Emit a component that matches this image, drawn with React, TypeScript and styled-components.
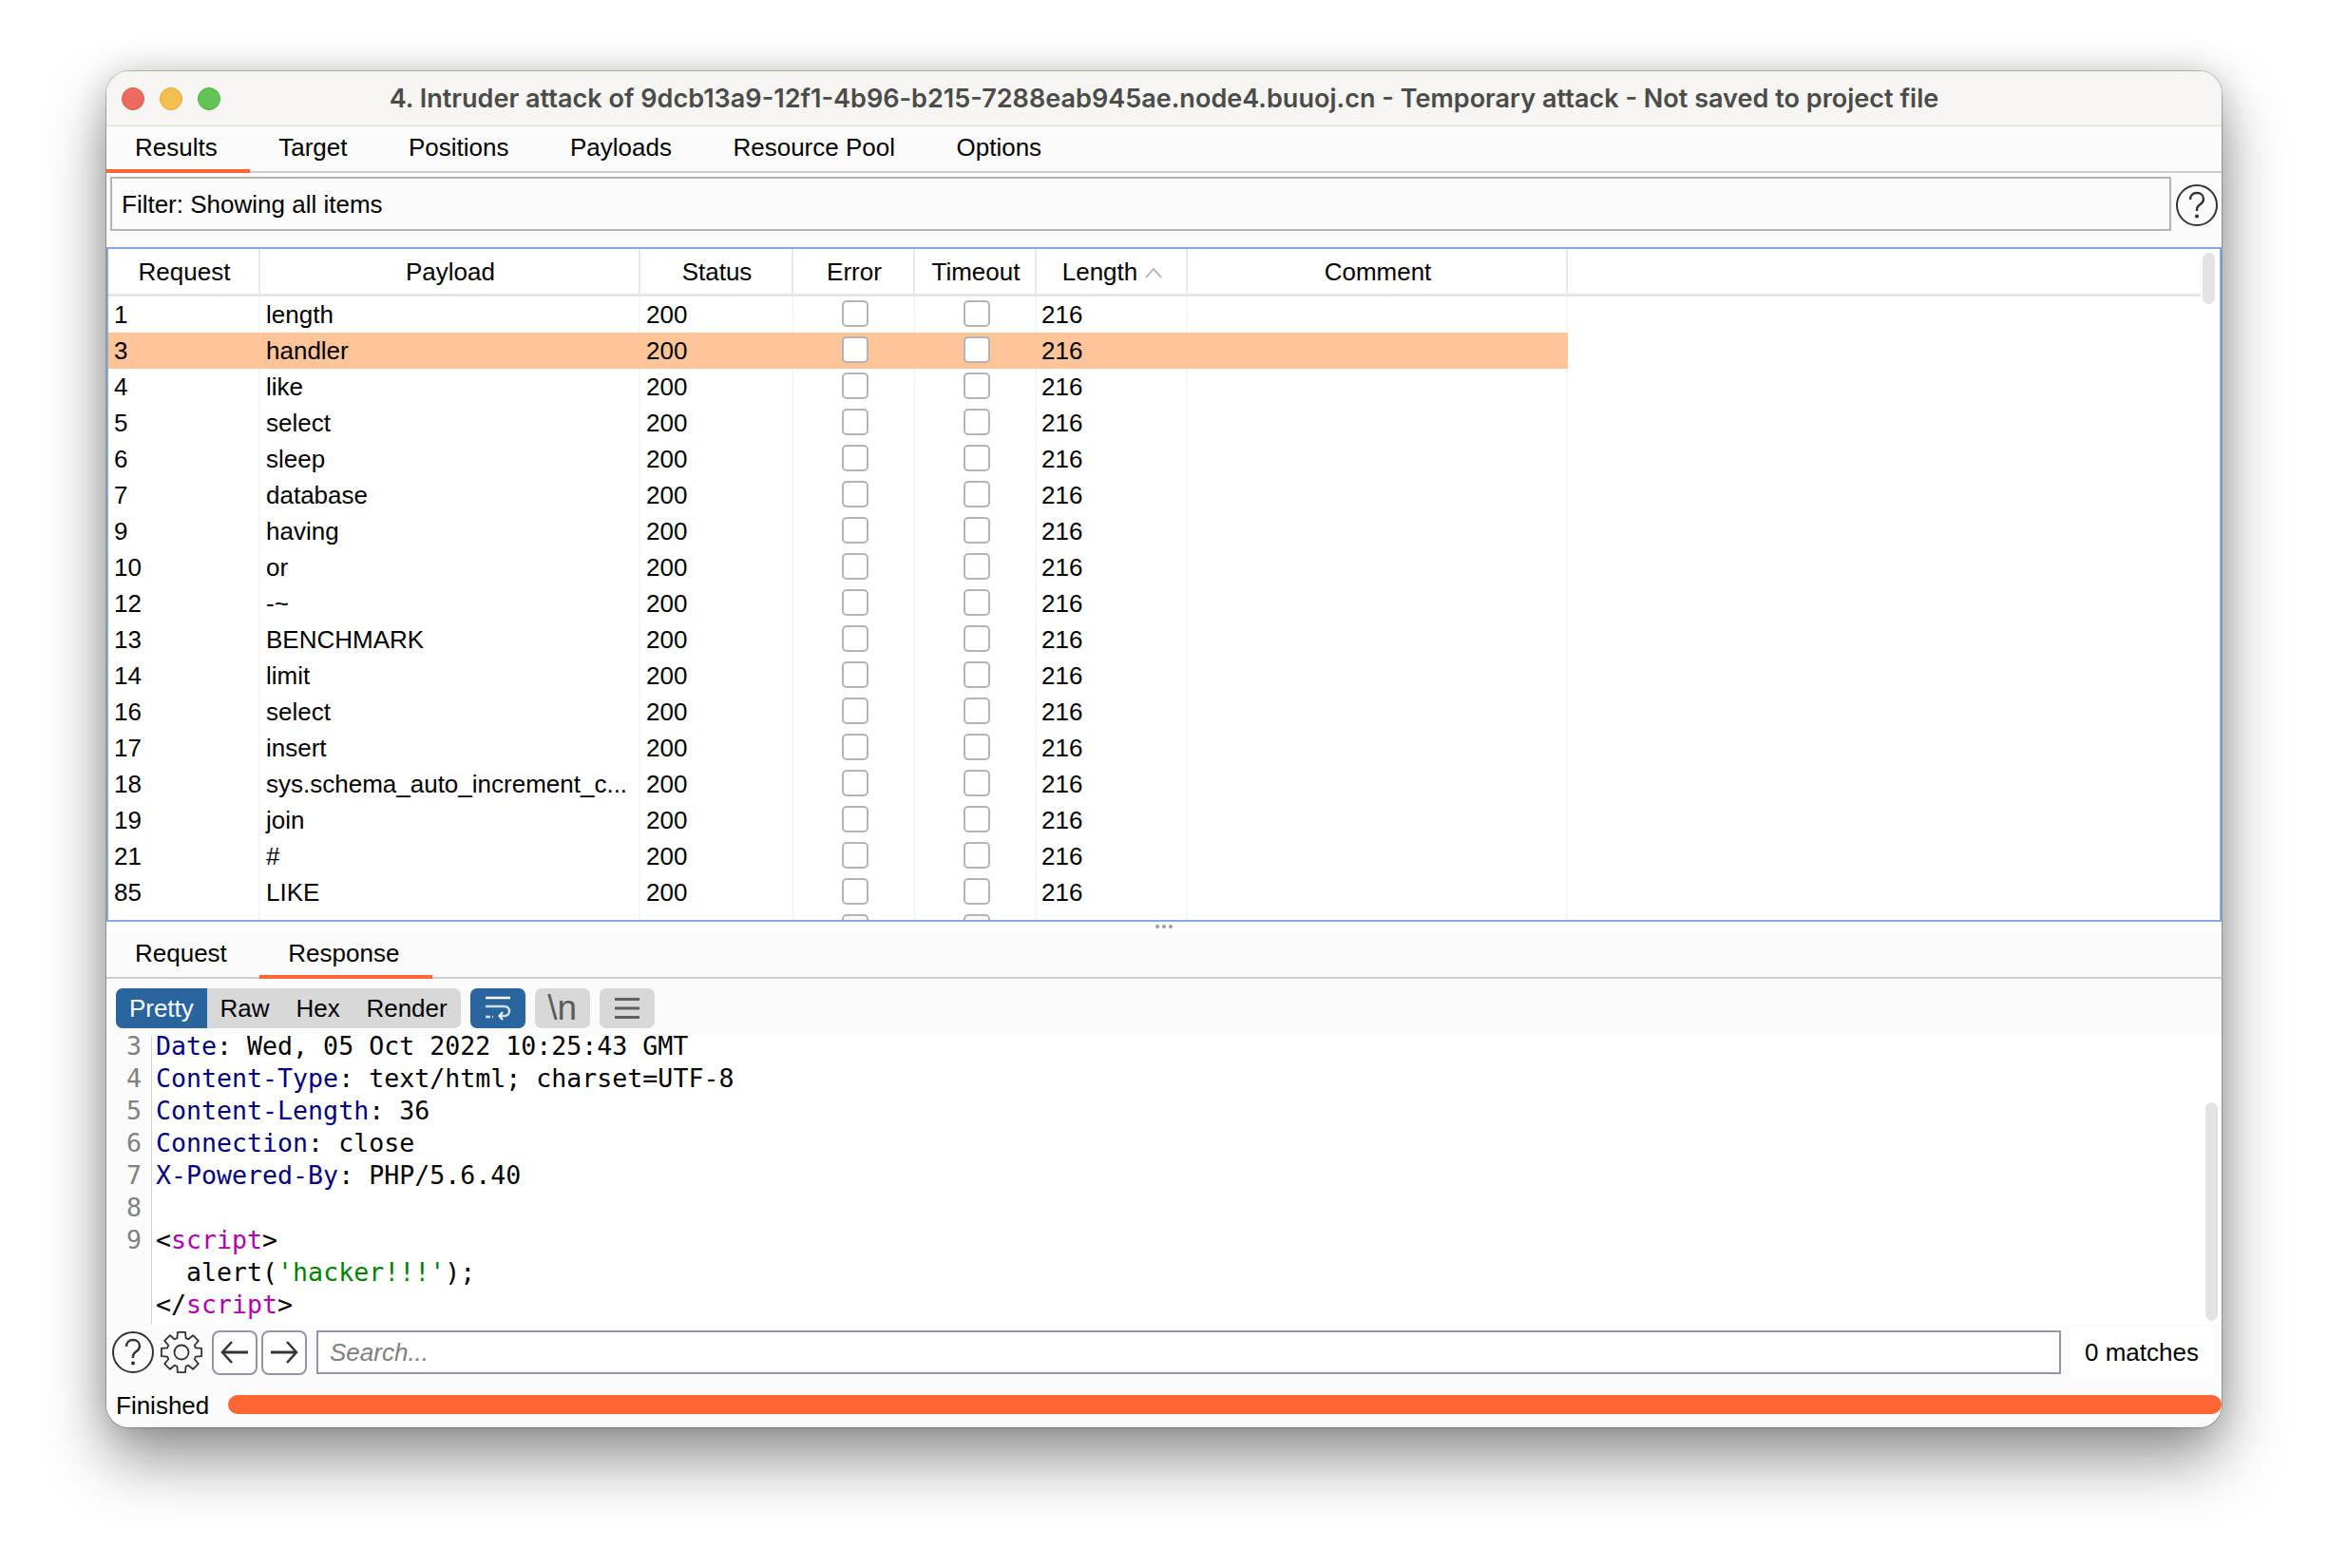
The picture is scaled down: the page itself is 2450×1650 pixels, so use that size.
import React from "react";
import styled, { createGlobalStyle } from "styled-components";

const Global = createGlobalStyle`
  html, body { margin: 0; padding: 0; background: #ffffff; }
  body { font-family: "Liberation Sans", Arial, sans-serif; color: #000; }
`;

const Page = styled.div`
  width: 2450px;
  height: 1650px;
  padding: 75px 112px 0;
  box-sizing: border-box;
  overflow: hidden;
`;

const Window = styled.div`
  width: 2226px;
  height: 1427px;
  background: #fbfbfb;
  border-radius: 24px;
  overflow: hidden;
  display: flex;
  flex-direction: column;
`;

const WindowShadow = styled.div`
  width: 2226px;
  height: 1427px;
  border-radius: 24px;
  box-shadow: 0 0 0 1px rgba(0, 0, 0, 0.22), 0 34px 66px rgba(0, 0, 0, 0.42), 0 0 34px rgba(0, 0, 0, 0.16);
`;

const TitleBar = styled.div`
  position: relative;
  height: 57px;
  flex: none;
  background: #f6f5f2;
  border-bottom: 1px solid #dcdcda;
  display: flex;
  align-items: center;
  justify-content: center;
`;

const Lights = styled.div`
  position: absolute;
  left: 16px;
  top: 17px;
  display: flex;
  gap: 16px;
`;

const Light = styled.span<{ $c: string; $b: string }>`
  width: 24px;
  height: 24px;
  border-radius: 50%;
  box-sizing: border-box;
  background: ${(p) => p.$c};
  border: 1px solid ${(p) => p.$b};
`;

const Title = styled.div`
  font-family: Inter, "Liberation Sans", sans-serif;
  font-weight: 600;
  font-size: 27.05px;
  color: #4b4b49;
  white-space: nowrap;
`;

const TabBar = styled.div<{ $h: number }>`
  height: ${(p) => p.$h}px;
  flex: none;
  box-sizing: border-box;
  display: flex;
  border-bottom: 2px solid #cbcdcb;
`;

const Tab = styled.div<{ $active?: boolean; $pt: number }>`
  position: relative;
  padding: ${(p) => p.$pt}px 34.5px 0 30px;
  font-size: 26px;
  line-height: 1;
  height: 100%;
  box-sizing: border-box;
  &::after {
    content: "";
    display: ${(p) => (p.$active ? "block" : "none")};
    position: absolute;
    left: 0;
    right: 0;
    bottom: -2px;
    height: 4px;
    background: #ff6633;
  }
`;

const FilterRow = styled.div`
  height: 78px;
  flex: none;
  display: flex;
  align-items: flex-start;
  padding: 4px 0 0 4px;
  box-sizing: border-box;
  gap: 4px;
`;

const FilterBox = styled.div`
  width: 2169px;
  height: 57px;
  box-sizing: border-box;
  border: 2px solid #b5b5b5;
  background: #fbfbfb;
  padding: 2px 0 0 10px;
  display: flex;
  align-items: center;
  font-size: 26px;
`;

const HelpIcon = styled.svg`
  width: 46px;
  height: 46px;
  flex: none;
`;

const FilterHelp = styled(HelpIcon)`
  margin-top: 7px;
`;

const TablePanel = styled.div`
  position: relative;
  height: 710px;
  flex: none;
  box-sizing: border-box;
  border: 2px solid #84aad8;
  background: #fff;
  overflow: hidden;
`;

const Scroll = styled.div<{ $top: number; $h: number; $right: number }>`
  position: absolute;
  top: ${(p) => p.$top}px;
  right: ${(p) => p.$right}px;
  width: 13px;
  height: ${(p) => p.$h}px;
  border-radius: 7px;
  background: #e3e3e3;
`;

const cols = "160px 400px 161px 128px 128px 159px 400px";

const HeaderRow = styled.div`
  display: grid;
  grid-template-columns: ${cols};
  width: 2202px;
  height: 50px;
  box-sizing: border-box;
  border-bottom: 3px solid #e6e6e6;
`;

const HeadCell = styled.div`
  display: flex;
  align-items: center;
  justify-content: center;
  gap: 8px;
  font-size: 26px;
  padding: 2px 0 0 2px;
  border-right: 2px solid #e8e8e8;
  box-sizing: border-box;
`;

const Rows = styled.div`
  display: flex;
  flex-direction: column;
`;

const Row = styled.div<{ $sel?: boolean }>`
  display: grid;
  grid-template-columns: ${cols};
  width: 1536px;
  height: 38px;
  flex: none;
  background: ${(p) => (p.$sel ? "#ffc497" : "transparent")};
`;

const Cell = styled.div<{ $sel?: boolean; $pad: number }>`
  font-size: 26px;
  line-height: 38px;
  padding-left: ${(p) => p.$pad}px;
  white-space: nowrap;
  overflow: hidden;
  box-sizing: border-box;
  border-right: 2px solid ${(p) => (p.$sel ? "transparent" : "#f5f5f5")};
`;

const CheckCell = styled.div<{ $sel?: boolean }>`
  display: flex;
  align-items: center;
  justify-content: center;
  padding: 0 0 2px 4px;
  box-sizing: border-box;
  border-right: 2px solid ${(p) => (p.$sel ? "transparent" : "#f5f5f5")};
`;

const Check = styled.span`
  width: 28px;
  height: 28px;
  box-sizing: border-box;
  border-radius: 5px;
  border: 2px solid #b4b4b4;
  background: #fff;
`;

const Splitter = styled.div`
  height: 10px;
  flex: none;
  background: #ffffff;
  display: flex;
  align-items: center;
  justify-content: center;
  gap: 3px;
  box-sizing: border-box;
`;

const Dot = styled.span`
  width: 4px;
  height: 4px;
  border-radius: 50%;
  background: #9a9a9a;
`;

const Toolbar = styled.div`
  height: 60px;
  flex: none;
  box-sizing: border-box;
  padding: 10px 0 0 10px;
  display: flex;
  align-items: flex-start;
  gap: 10px;
`;

const Segment = styled.div`
  display: flex;
  height: 42px;
  border-radius: 7px;
  background: #d8d8d8;
  overflow: hidden;
`;

const SegButton = styled.div<{ $active?: boolean }>`
  padding: 0 13.9px;
  font-size: 26px;
  line-height: 42px;
  background: ${(p) => (p.$active ? "#28659f" : "transparent")};
  color: ${(p) => (p.$active ? "#fff" : "#000")};
`;

const IconButton = styled.div<{ $active?: boolean }>`
  width: 58px;
  height: 42px;
  border-radius: 7px;
  background: ${(p) => (p.$active ? "#28659f" : "#d8d8d8")};
  display: flex;
  align-items: center;
  justify-content: center;
  color: #5c5c5c;
  font-size: 37px;
  line-height: 42px;
`;

const Editor = styled.div`
  position: relative;
  height: 304px;
  flex: none;
  background: #fff;
  overflow: hidden;
  display: flex;
`;

const Gutter = styled.div`
  width: 48px;
  flex: none;
  box-sizing: border-box;
  background: #fbfbfb;
  border-right: 1px solid #d4d4d4;
  padding-right: 10px;
  text-align: right;
  font-family: "DejaVu Sans Mono", monospace;
  font-size: 26.6px;
  line-height: 34px;
  color: #808080;
  margin-top: -6px;
  padding-bottom: 10px;
`;

const GutterNum = styled.div`
  height: 34px;
`;

const Code = styled.div`
  padding-left: 4px;
  margin-top: -6px;
  font-family: "DejaVu Sans Mono", monospace;
  font-size: 26.6px;
  line-height: 34px;
  color: #000;
  white-space: pre;
`;

const CodeLine = styled.div`
  height: 34px;
`;

const Key = styled.span`
  color: #000080;
`;
const Tag = styled.span`
  color: #b000b0;
`;
const Str = styled.span`
  color: #008000;
`;

const SearchRow = styled.div`
  height: 58px;
  flex: none;
  display: flex;
  align-items: center;
  padding-left: 5px;
  box-sizing: border-box;
`;

const SearchHelp = styled(HelpIcon)`
  margin-right: 5px;
`;

const GearIcon = styled.svg`
  width: 46px;
  height: 46px;
  flex: none;
  margin-right: 9px;
`;

const ArrowButton = styled.div`
  width: 48px;
  height: 47px;
  box-sizing: border-box;
  border: 2px solid #9595a8;
  border-radius: 8px;
  background: #fff;
  margin-right: 4px;
  display: flex;
  align-items: center;
  justify-content: center;
`;

const SearchBox = styled.div`
  width: 1836px;
  height: 46px;
  margin-left: 6px;
  box-sizing: border-box;
  border: 2px solid #9595a8;
  background: #fff;
  padding-left: 12px;
  display: flex;
  align-items: center;
  font-size: 26px;
  font-style: italic;
  color: #808080;
`;

const Matches = styled.div`
  width: 150px;
  height: 54px;
  margin-left: 10px;
  background: #fff;
  box-sizing: border-box;
  padding-left: 15px;
  display: flex;
  align-items: center;
  font-size: 26px;
`;

const StatusRow = styled.div`
  flex: 1;
  display: flex;
  align-items: flex-start;
  padding-left: 10px;
  box-sizing: border-box;
`;

const StatusText = styled.div`
  width: 118px;
  flex: none;
  font-size: 26px;
  line-height: 30px;
  padding-top: 12px;
`;

const Progress = styled.div`
  flex: 1;
  height: 20px;
  margin-top: 16px;
  border-radius: 10px;
  background: #ff6633;
`;

const Help = ({ as: C }: { as: typeof HelpIcon }) => (
  <C viewBox="0 0 46 46" fill="none">
    <circle cx="23" cy="23" r="21" stroke="#333" strokeWidth="2" />
    <path d="M16 17c0-4.500 3-7 7-7s7 2.600 7 6.500c0 3-1.800 4.600-4 6-1.800 1.200-3 2.300-3 5v1.500" stroke="#333" strokeWidth="2.400" />
    <circle cx="23" cy="34.500" r="2" fill="#333" />
  </C>
);

const gearPath = (() => {
  const pts: string[] = [];
  const cx = 23;
  const cy = 23;
  for (let i = 0; i < 8; i++) {
    const a = (i * Math.PI) / 4;
    const at = (r: number, d: number) => {
      const t = a + d;
      return `${(cx + r * Math.cos(t)).toFixed(2)} ${(cy + r * Math.sin(t)).toFixed(2)}`;
    };
    pts.push(at(15.5, -0.3), at(21.5, -0.19), at(21.5, 0.19), at(15.5, 0.3));
  }
  return `M${pts.join("L")}Z`;
})();

const tabsTop = ["Results", "Target", "Positions", "Payloads", "Resource Pool", "Options"];

const rows: [string, string][] = [
  ["1", "length"],
  ["3", "handler"],
  ["4", "like"],
  ["5", "select"],
  ["6", "sleep"],
  ["7", "database"],
  ["9", "having"],
  ["10", "or"],
  ["12", "-~"],
  ["13", "BENCHMARK"],
  ["14", "limit"],
  ["16", "select"],
  ["17", "insert"],
  ["18", "sys.schema_auto_increment_c..."],
  ["19", "join"],
  ["21", "#"],
  ["85", "LIKE"],
  ["171", ""],
];

export default function App() {
  return (
    <Page>
      <Global />
      <WindowShadow>
        <Window>
          <TitleBar>
            <Lights>
              <Light $c="#ed6a5e" $b="#d9584d" />
              <Light $c="#f4bf4f" $b="#dfa93c" />
              <Light $c="#61c454" $b="#52ad46" />
            </Lights>
            <Title>4. Intruder attack of 9dcb13a9-12f1-4b96-b215-7288eab945ae.node4.buuoj.cn - Temporary attack - Not saved to project file</Title>
          </TitleBar>
          <TabBar $h={49}>
            {tabsTop.map((t, i) => (
              <Tab key={t} $pt={9} $active={i === 0}>{t}</Tab>
            ))}
          </TabBar>
          <FilterRow>
            <FilterBox>Filter: Showing all items</FilterBox>
            <Help as={FilterHelp} />
          </FilterRow>
          <TablePanel>
            <HeaderRow>
              <HeadCell>Request</HeadCell>
              <HeadCell>Payload</HeadCell>
              <HeadCell>Status</HeadCell>
              <HeadCell>Error</HeadCell>
              <HeadCell>Timeout</HeadCell>
              <HeadCell>
                Length
                <svg width="18" height="12" viewBox="0 0 18 12" fill="none">
                  <path d="M1 11 9 2l8 9" stroke="#a8a8a8" strokeWidth="1.500" />
                </svg>
              </HeadCell>
              <HeadCell>Comment</HeadCell>
            </HeaderRow>
            <Rows>
              {rows.map(([id, payload]) => {
                const sel = id === "3";
                return (
                  <Row key={id} $sel={sel}>
                    <Cell $sel={sel} $pad={6}>{id}</Cell>
                    <Cell $sel={sel} $pad={6}>{payload}</Cell>
                    <Cell $sel={sel} $pad={6}>200</Cell>
                    <CheckCell $sel={sel}><Check /></CheckCell>
                    <CheckCell $sel={sel}><Check /></CheckCell>
                    <Cell $sel={sel} $pad={5}>216</Cell>
                    <Cell $sel={sel} $pad={6} />
                  </Row>
                );
              })}
            </Rows>
            <Scroll $top={4} $h={54} $right={5} />
          </TablePanel>
          <Splitter>
            <Dot />
            <Dot />
            <Dot />
          </Splitter>
          <TabBar $h={50}>
            <Tab $pt={10}>Request</Tab>
            <Tab $pt={10} $active>Response</Tab>
          </TabBar>
          <Toolbar>
            <Segment>
              <SegButton $active>Pretty</SegButton>
              <SegButton>Raw</SegButton>
              <SegButton>Hex</SegButton>
              <SegButton>Render</SegButton>
            </Segment>
            <IconButton $active>
              <svg width="30" height="30" viewBox="0 0 30 30" fill="none" stroke="#fff" strokeWidth="2.500">
                <path d="M2 4h26" />
                <path d="M2 13h20a4.500 4.500 0 0 1 0 10h-4" strokeOpacity="0.8" />
                <path d="m20 19-3.500 4 3.500 4" strokeWidth="2" />
                <path d="M2 24h8" strokeDasharray="5 2" strokeOpacity="0.8" />
              </svg>
            </IconButton>
            <IconButton>\n</IconButton>
            <IconButton>
              <svg width="26" height="24" viewBox="0 0 26 24" fill="none" stroke="#5f5f5f" strokeWidth="3">
                <path d="M0 2.500h26M0 12h26M0 21.500h26" />
              </svg>
            </IconButton>
          </Toolbar>
          <Editor>
            <Gutter>
              {[3, 4, 5, 6, 7, 8, 9].map((n) => (
                <GutterNum key={n}>{n}</GutterNum>
              ))}
            </Gutter>
            <Code>
              <CodeLine><Key>Date</Key>: Wed, 05 Oct 2022 10:25:43 GMT</CodeLine>
              <CodeLine><Key>Content-Type</Key>: text/html; charset=UTF-8</CodeLine>
              <CodeLine><Key>Content-Length</Key>: 36</CodeLine>
              <CodeLine><Key>Connection</Key>: close</CodeLine>
              <CodeLine><Key>X-Powered-By</Key>: PHP/5.6.40</CodeLine>
              <CodeLine />
              <CodeLine>&lt;<Tag>script</Tag>&gt;</CodeLine>
              <CodeLine>  alert(<Str>'hacker!!!'</Str>);</CodeLine>
              <CodeLine>&lt;/<Tag>script</Tag>&gt;</CodeLine>
            </Code>
            <Scroll $top={70} $h={230} $right={4} />
          </Editor>
          <SearchRow>
            <Help as={SearchHelp} />
            <GearIcon viewBox="0 0 46 46" fill="none" stroke="#333" strokeWidth="1.800" strokeLinejoin="round">
              <path d={gearPath} />
              <circle cx="23" cy="23" r="7.500" />
            </GearIcon>
            <ArrowButton>
              <svg width="32" height="28" viewBox="0 0 32 28" fill="none" stroke="#333" strokeWidth="3">
                <path d="M30 14H4" />
                <path d="M13 3 3 14l10 11" strokeWidth="2.500" />
              </svg>
            </ArrowButton>
            <ArrowButton>
              <svg width="32" height="28" viewBox="0 0 32 28" fill="none" stroke="#333" strokeWidth="3">
                <path d="M2 14h26" />
                <path d="m19 3 10 11-10 11" strokeWidth="2.500" />
              </svg>
            </ArrowButton>
            <SearchBox>Search...</SearchBox>
            <Matches>0 matches</Matches>
          </SearchRow>
          <StatusRow>
            <StatusText>Finished</StatusText>
            <Progress />
          </StatusRow>
        </Window>
      </WindowShadow>
    </Page>
  );
}
